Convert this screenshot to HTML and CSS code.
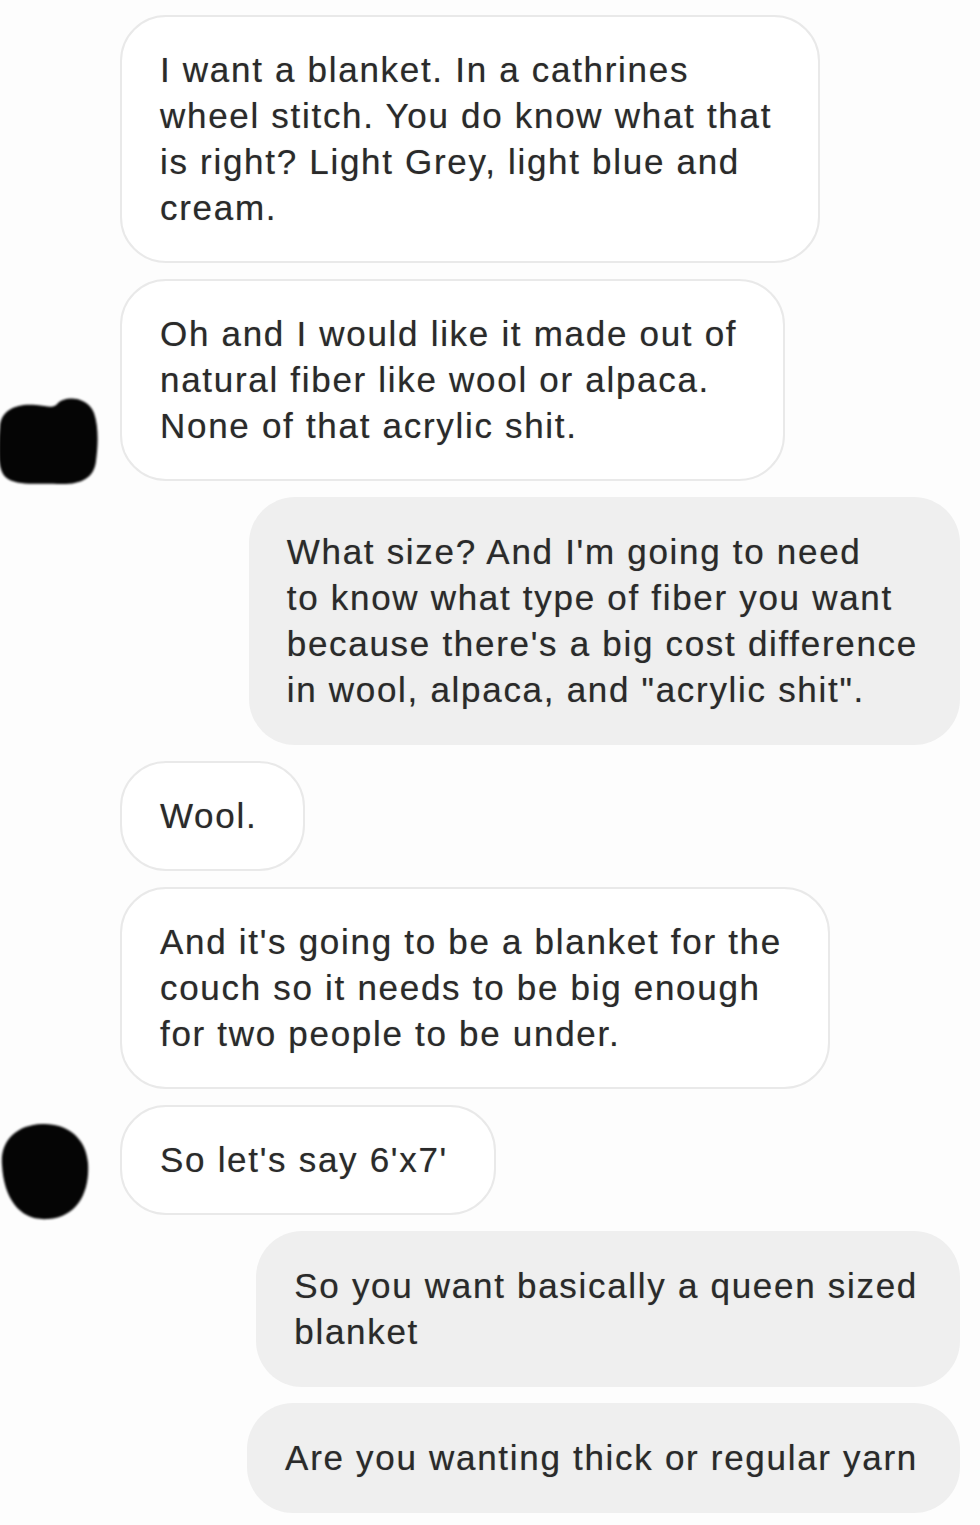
FILE: index.html
```html
<!DOCTYPE html>
<html lang="en">

<head>
    <meta charset="UTF-8">
    <meta name="viewport" content="width=device-width, initial-scale=1.0">
    <title>Blanket chat</title>
    <link rel="stylesheet" href="styles.css">
</head>

<body>
    <div class="thread">

        <!-- them -->
        <div class="row them">
            <div class="avatar"></div>
            <div class="bubble">I want a blanket. In a cathrines<br>wheel stitch. You do know what that<br>is right? Light Grey, light blue and<br>cream.</div>
        </div>

        <div class="row them">
            <div class="avatar">
                <svg width="104" height="92" viewBox="0 0 104 92">
                    <path d="M4 30 C6 14 22 8 40 10 C52 11 58 14 62 8 C70 0 92 2 98 18 C103 32 102 52 100 66 C98 84 84 90 62 89 C44 88 24 91 12 84 C0 77 2 50 4 30 Z" fill="#050505"/>
                </svg>
            </div>
            <div class="bubble">Oh and I would like it made out of<br>natural fiber like wool or alpaca.<br>None of that acrylic shit.</div>
        </div>

        <!-- me -->
        <div class="row me">
            <div class="bubble">What size? And I'm going to need<br>to know what type of fiber you want<br>because there's a big cost difference<br>in wool, alpaca, and "acrylic shit".</div>
        </div>

        <!-- them -->
        <div class="row them">
            <div class="avatar"></div>
            <div class="bubble">Wool.</div>
        </div>

        <div class="row them">
            <div class="avatar"></div>
            <div class="bubble">And it's going to be a blanket for the<br>couch so it needs to be big enough<br>for two people to be under.</div>
        </div>

        <div class="row them">
            <div class="avatar">
                <svg width="96" height="100" viewBox="0 0 96 100">
                    <path d="M6 44 C4 20 20 4 46 3 C70 2 90 16 92 42 C94 70 82 96 52 98 C24 100 8 78 6 44 Z" fill="#050505"/>
                </svg>
            </div>
            <div class="bubble">So let's say 6'x7'</div>
        </div>

        <!-- me -->
        <div class="row me">
            <div class="bubble">So you want basically a queen sized<br>blanket</div>
        </div>

        <div class="row me">
            <div class="bubble">Are you wanting thick or regular yarn</div>
        </div>

    </div>
</body>

</html>
```

FILE: styles.css
```css
body {
    margin: 0;
    padding: 0;
    background-color: #fdfdfd;
    font-family: 'Liberation Sans', Arial, sans-serif;
}

.thread {
    display: flex;
    flex-direction: column;
    gap: 16px;
    padding: 15px 20px 0 0;
}

.row {
    display: flex;
    align-items: flex-end;
}

.row.me {
    justify-content: flex-end;
}

.avatar {
    width: 120px;
    flex-shrink: 0;
    display: flex;
    align-items: flex-end;
}

.avatar svg {
    display: block;
    margin-left: -4px;
    margin-bottom: -6px;
    filter: blur(1px);
}

.bubble {
    font-size: 35px;
    line-height: 46px;
    color: #2a2a2a;
    padding: 32px 42px 32px 38px;
    border-radius: 46px;
    box-sizing: border-box;
    letter-spacing: 1.7px;
    text-shadow: 0 0 1px rgba(0, 0, 0, 0.35);
}

.them .bubble {
    background-color: #ffffff;
    border: 2px solid #e9e9e9;
    padding: 30px 46px 30px 38px;
}

.me .bubble {
    background-color: #efefef;
}
```
